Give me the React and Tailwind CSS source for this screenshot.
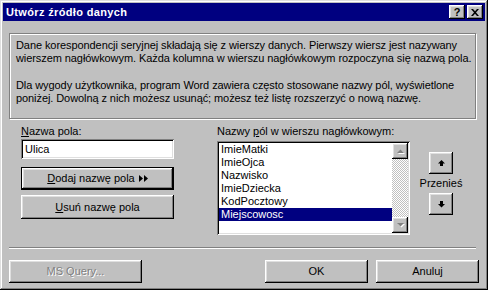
import React from "react";

const raised =
  "shadow-[inset_-1px_-1px_0_#000,inset_1px_1px_0_#fff,inset_-2px_-2px_0_#808080,inset_2px_2px_0_#dfdfdf]";
const sunken =
  "shadow-[inset_1px_1px_0_#808080,inset_-1px_-1px_0_#fff,inset_2px_2px_0_#000,inset_-2px_-2px_0_#dfdfdf]";

function Btn({ className = "", children, def = false }) {
  if (def) {
    return (
      <div className={"border border-black bg-[#c0c0c0] " + className}>
        <div className={"w-full h-full flex items-center justify-center " + raised}>{children}</div>
      </div>
    );
  }
  return (
    <div className={"bg-[#c0c0c0] flex items-center justify-center " + raised + " " + className}>
      {children}
    </div>
  );
}

function ScrollArrow({ up }) {
  return (
    <div className={"w-[16px] h-[16px] bg-[#c0c0c0] flex items-center justify-center " + raised}>
      <svg width="9" height="6" viewBox="0 0 9 6" className="block">
        {up ? (
          <>
            <polygon points="1,5 8,5 4.5,1.5" fill="#fff" transform="translate(1,1)" />
            <polygon points="1,5 8,5 4.5,1.5" fill="#808080" />
          </>
        ) : (
          <>
            <polygon points="1,1 8,1 4.5,4.5" fill="#fff" transform="translate(1,1)" />
            <polygon points="1,1 8,1 4.5,4.5" fill="#808080" />
          </>
        )}
      </svg>
    </div>
  );
}

function MoveArrow({ up }) {
  return (
    <svg width="7" height="7" viewBox="0 0 7 7" className="block">
      {up ? (
        <>
          <polygon points="3.5,0 7,3.5 0,3.5" fill="#000" />
          <rect x="2" y="3" width="3" height="3" fill="#000" />
        </>
      ) : (
        <>
          <rect x="2" y="0" width="3" height="3" fill="#000" />
          <polygon points="0,3 7,3 3.5,6.5" fill="#000" />
        </>
      )}
    </svg>
  );
}

export default function App() {
  const items = ["ImieMatki", "ImieOjca", "Nazwisko", "ImieDziecka", "KodPocztowy", "Miejscowosc"];
  return (
    <div
      className={
        "w-[488px] h-[290px] bg-[#c0c0c0] p-[3px] flex flex-col text-[11px] leading-[13px] text-black font-['Liberation_Sans',Arial,sans-serif] " +
        "shadow-[inset_-1px_-1px_0_#000,inset_1px_1px_0_#dfdfdf,inset_-2px_-2px_0_#808080,inset_2px_2px_0_#fff]"
      }
    >
      {/* Title bar */}
      <div className="h-[18px] bg-[#000080] flex items-center pl-[3px] pr-[2px]">
        <span className="text-white font-bold text-[11px] tracking-[0.35px]">Utwórz źródło danych</span>
        <div className="ml-auto flex gap-[2px]">
          <div className={"w-[16px] h-[14px] bg-[#c0c0c0] flex items-center justify-center " + raised}>
            <span className="font-bold text-[11px] leading-none">?</span>
          </div>
          <div className={"w-[16px] h-[14px] bg-[#c0c0c0] flex items-center justify-center " + raised}>
            <svg width="8" height="7" viewBox="0 0 8 7" className="block">
              <path d="M0 0h2l2 2.2L6 0h2L5 3.5 8 7H6L4 4.8 2 7H0l3-3.5z" fill="#000" />
            </svg>
          </div>
        </div>
      </div>

      {/* Info box */}
      <div className="mt-[12px] ml-[6px] w-[467px] h-[86px] border border-[#808080] shadow-[1px_1px_0_#fff,inset_1px_1px_0_#fff] pt-[5px] pl-[6px] whitespace-nowrap tracking-[-0.08px]">
        <p>Dane korespondencji seryjnej składają się z wierszy danych. Pierwszy wiersz jest nazywany</p>
        <p>wierszem nagłówkowym. Każda kolumna w wierszu nagłówkowym rozpoczyna się nazwą pola.</p>
        <p className="mt-[14px]">Dla wygody użytkownika, program Word zawiera często stosowane nazwy pól, wyświetlone</p>
        <p>poniżej. Dowolną z nich możesz usunąć; możesz też listę rozszerzyć o nową nazwę.</p>
      </div>

      {/* Main row */}
      <div className="mt-[6px] flex items-start">
        {/* Left */}
        <div className="ml-[18px] w-[153px] flex flex-col">
          <div className="h-[14px]">
            <u>N</u>azwa pola:
          </div>
          <div className={"h-[20px] bg-white flex items-center pl-[4px] " + sunken}>Ulica</div>
          <Btn def className="mt-[8px] h-[23px]">
            <span>
              <u>D</u>odaj nazwę pola
            </span>
            <svg width="9" height="7" viewBox="0 0 9 7" className="block ml-[4px]">
              <polygon points="0,0 4,3.5 0,7" fill="#000" />
              <polygon points="5,0 9,3.5 5,7" fill="#000" />
            </svg>
          </Btn>
          <Btn className="mt-[5px] h-[24px]">
            <span>
              <u>U</u>suń nazwę pola
            </span>
          </Btn>
        </div>

        {/* Middle list */}
        <div className="ml-[43px] w-[193px] flex flex-col">
          <div className="h-[13px]">
            Nazwy <u>p</u>ól w wierszu nagłówkowym:
          </div>
          <div className={"mt-[3px] h-[94px] bg-white p-[2px] flex " + sunken}>
            <div className="flex-1 flex flex-col">
              {items.map((it, i) => (
                <div
                  key={it}
                  className={
                    "h-[13px] pl-[2px] " + (i === 5 ? "bg-[#000080] text-white" : "")
                  }
                >
                  {it}
                </div>
              ))}
            </div>
            <div className="w-[16px] flex flex-col bg-[image:repeating-conic-gradient(#c0c0c0_0_25%,#fff_0_50%)] bg-[length:2px_2px]">
              <ScrollArrow up />
              <div className="flex-1" />
              <ScrollArrow />
            </div>
          </div>
        </div>

        {/* Right move buttons */}
        <div className="ml-[8px] w-[46px] flex flex-col items-center">
          <Btn className="mt-[27px] w-[24px] h-[22px]">
            <MoveArrow up />
          </Btn>
          <div className="mt-[3px] h-[15px]">Przenieś</div>
          <Btn className="mt-[1px] w-[24px] h-[22px]">
            <MoveArrow />
          </Btn>
        </div>
      </div>

      {/* Separator */}
      <div className="mt-[12px] ml-[6px] w-[467px] border-t border-t-[#808080] border-b border-b-white" />

      {/* Bottom buttons */}
      <div className="mt-[11px] ml-[6px] flex">
        <Btn className="w-[133px] h-[23px]">
          <span className="text-[#808080] [text-shadow:1px_1px_0_#fff]">MS Query...</span>
        </Btn>
        <Btn className="ml-[123px] w-[103px] h-[23px]">OK</Btn>
        <Btn className="ml-[8px] w-[103px] h-[23px]">Anuluj</Btn>
      </div>
    </div>
  );
}
